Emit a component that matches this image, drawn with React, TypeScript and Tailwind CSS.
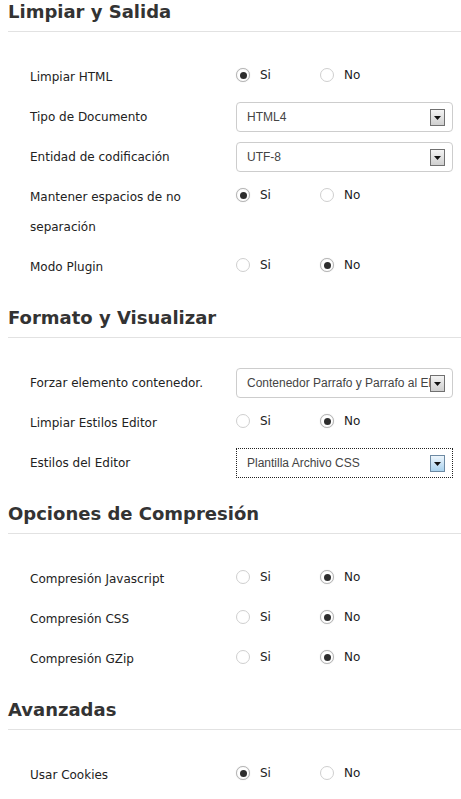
import React from "react";

type Row =
  | { label: string; kind: "radio"; value: "si" | "no" }
  | { label: string; kind: "select"; text: string; focused?: boolean };

const sections: { title: string; rows: Row[] }[] = [
  {
    title: "Limpiar y Salida",
    rows: [
      { label: "Limpiar HTML", kind: "radio", value: "si" },
      { label: "Tipo de Documento", kind: "select", text: "HTML4" },
      { label: "Entidad de codificación", kind: "select", text: "UTF-8" },
      { label: "Mantener espacios de no separación", kind: "radio", value: "si" },
      { label: "Modo Plugin", kind: "radio", value: "no" },
    ],
  },
  {
    title: "Formato y Visualizar",
    rows: [
      { label: "Forzar elemento contenedor.", kind: "select", text: "Contenedor Parrafo y Parrafo al Elemento" },
      { label: "Limpiar Estilos Editor", kind: "radio", value: "no" },
      { label: "Estilos del Editor", kind: "select", text: "Plantilla Archivo CSS", focused: true },
    ],
  },
  {
    title: "Opciones de Compresión",
    rows: [
      { label: "Compresión Javascript", kind: "radio", value: "no" },
      { label: "Compresión CSS", kind: "radio", value: "no" },
      { label: "Compresión GZip", kind: "radio", value: "no" },
    ],
  },
  {
    title: "Avanzadas",
    rows: [{ label: "Usar Cookies", kind: "radio", value: "si" }],
  },
];

function Radio({ checked, label }: { checked: boolean; label: string }) {
  return (
    <label className="flex w-[84px] items-center">
      <span
        className={`flex h-[14px] w-[14px] items-center justify-center rounded-full border bg-white ${
          checked ? "border-[#b5b5b5] shadow-[0_0_1px_#ccc]" : "border-[#cfcfcf]"
        }`}
      >
        {checked && <span className="h-[7px] w-[7px] rounded-full bg-[#2e2e2e]" />}
      </span>
      <span className="ml-[10px] text-[12px] text-[#222]">{label}</span>
    </label>
  );
}

function Select({ text, focused }: { text: string; focused?: boolean }) {
  return (
    <div
      className={`relative flex h-[30px] w-[217px] items-center bg-white pl-[10px] ${
        focused ? "border border-dotted border-[#222]" : "rounded-[4px] border border-[#cdcdcd]"
      }`}
    >
      <span className="w-[186px] overflow-hidden whitespace-nowrap font-['Liberation_Sans',Arial,sans-serif] text-[12px] text-[#444]">
        {text}
      </span>
      <span
        className={`absolute right-[7px] top-[6px] flex h-[17px] w-[15px] items-center justify-center border ${
          focused
            ? "border-[#6d8aa3] bg-gradient-to-b from-[#eef6fc] to-[#a9d2ee]"
            : "border-[#707070] bg-gradient-to-b from-[#f4f4f4] to-[#cfcfcf]"
        }`}
      >
        <svg width="7" height="4" viewBox="0 0 7 4">
          <path d="M0 0h7L3.5 4z" fill="#111" />
        </svg>
      </span>
    </div>
  );
}

export default function App() {
  return (
    <main className="min-h-screen bg-white pl-[8px] font-['DejaVu_Sans',Verdana,sans-serif] text-[#222]">
      {sections.map((s, i) => (
        <section key={s.title} className={i === 0 ? "" : "mt-[24px]"}>
          <h2 className="border-b border-[#e2e2e2] pb-[7px] text-[18px] font-bold leading-[24px] text-[#333]">
            {s.title}
          </h2>
          <div className="mt-[30px] flex flex-col gap-[10px] pl-[22px]">
            {s.rows.map((r) => (
              <div key={r.label} className="flex items-start">
                <div className="w-[206px] pr-[20px] text-[12px] leading-[30px]">{r.label}</div>
                {r.kind === "radio" ? (
                  <div className="flex h-[30px] items-center pb-[4px]">
                    <Radio checked={r.value === "si"} label="Si" />
                    <Radio checked={r.value === "no"} label="No" />
                  </div>
                ) : (
                  <Select text={r.text} focused={r.focused} />
                )}
              </div>
            ))}
          </div>
        </section>
      ))}
    </main>
  );
}
